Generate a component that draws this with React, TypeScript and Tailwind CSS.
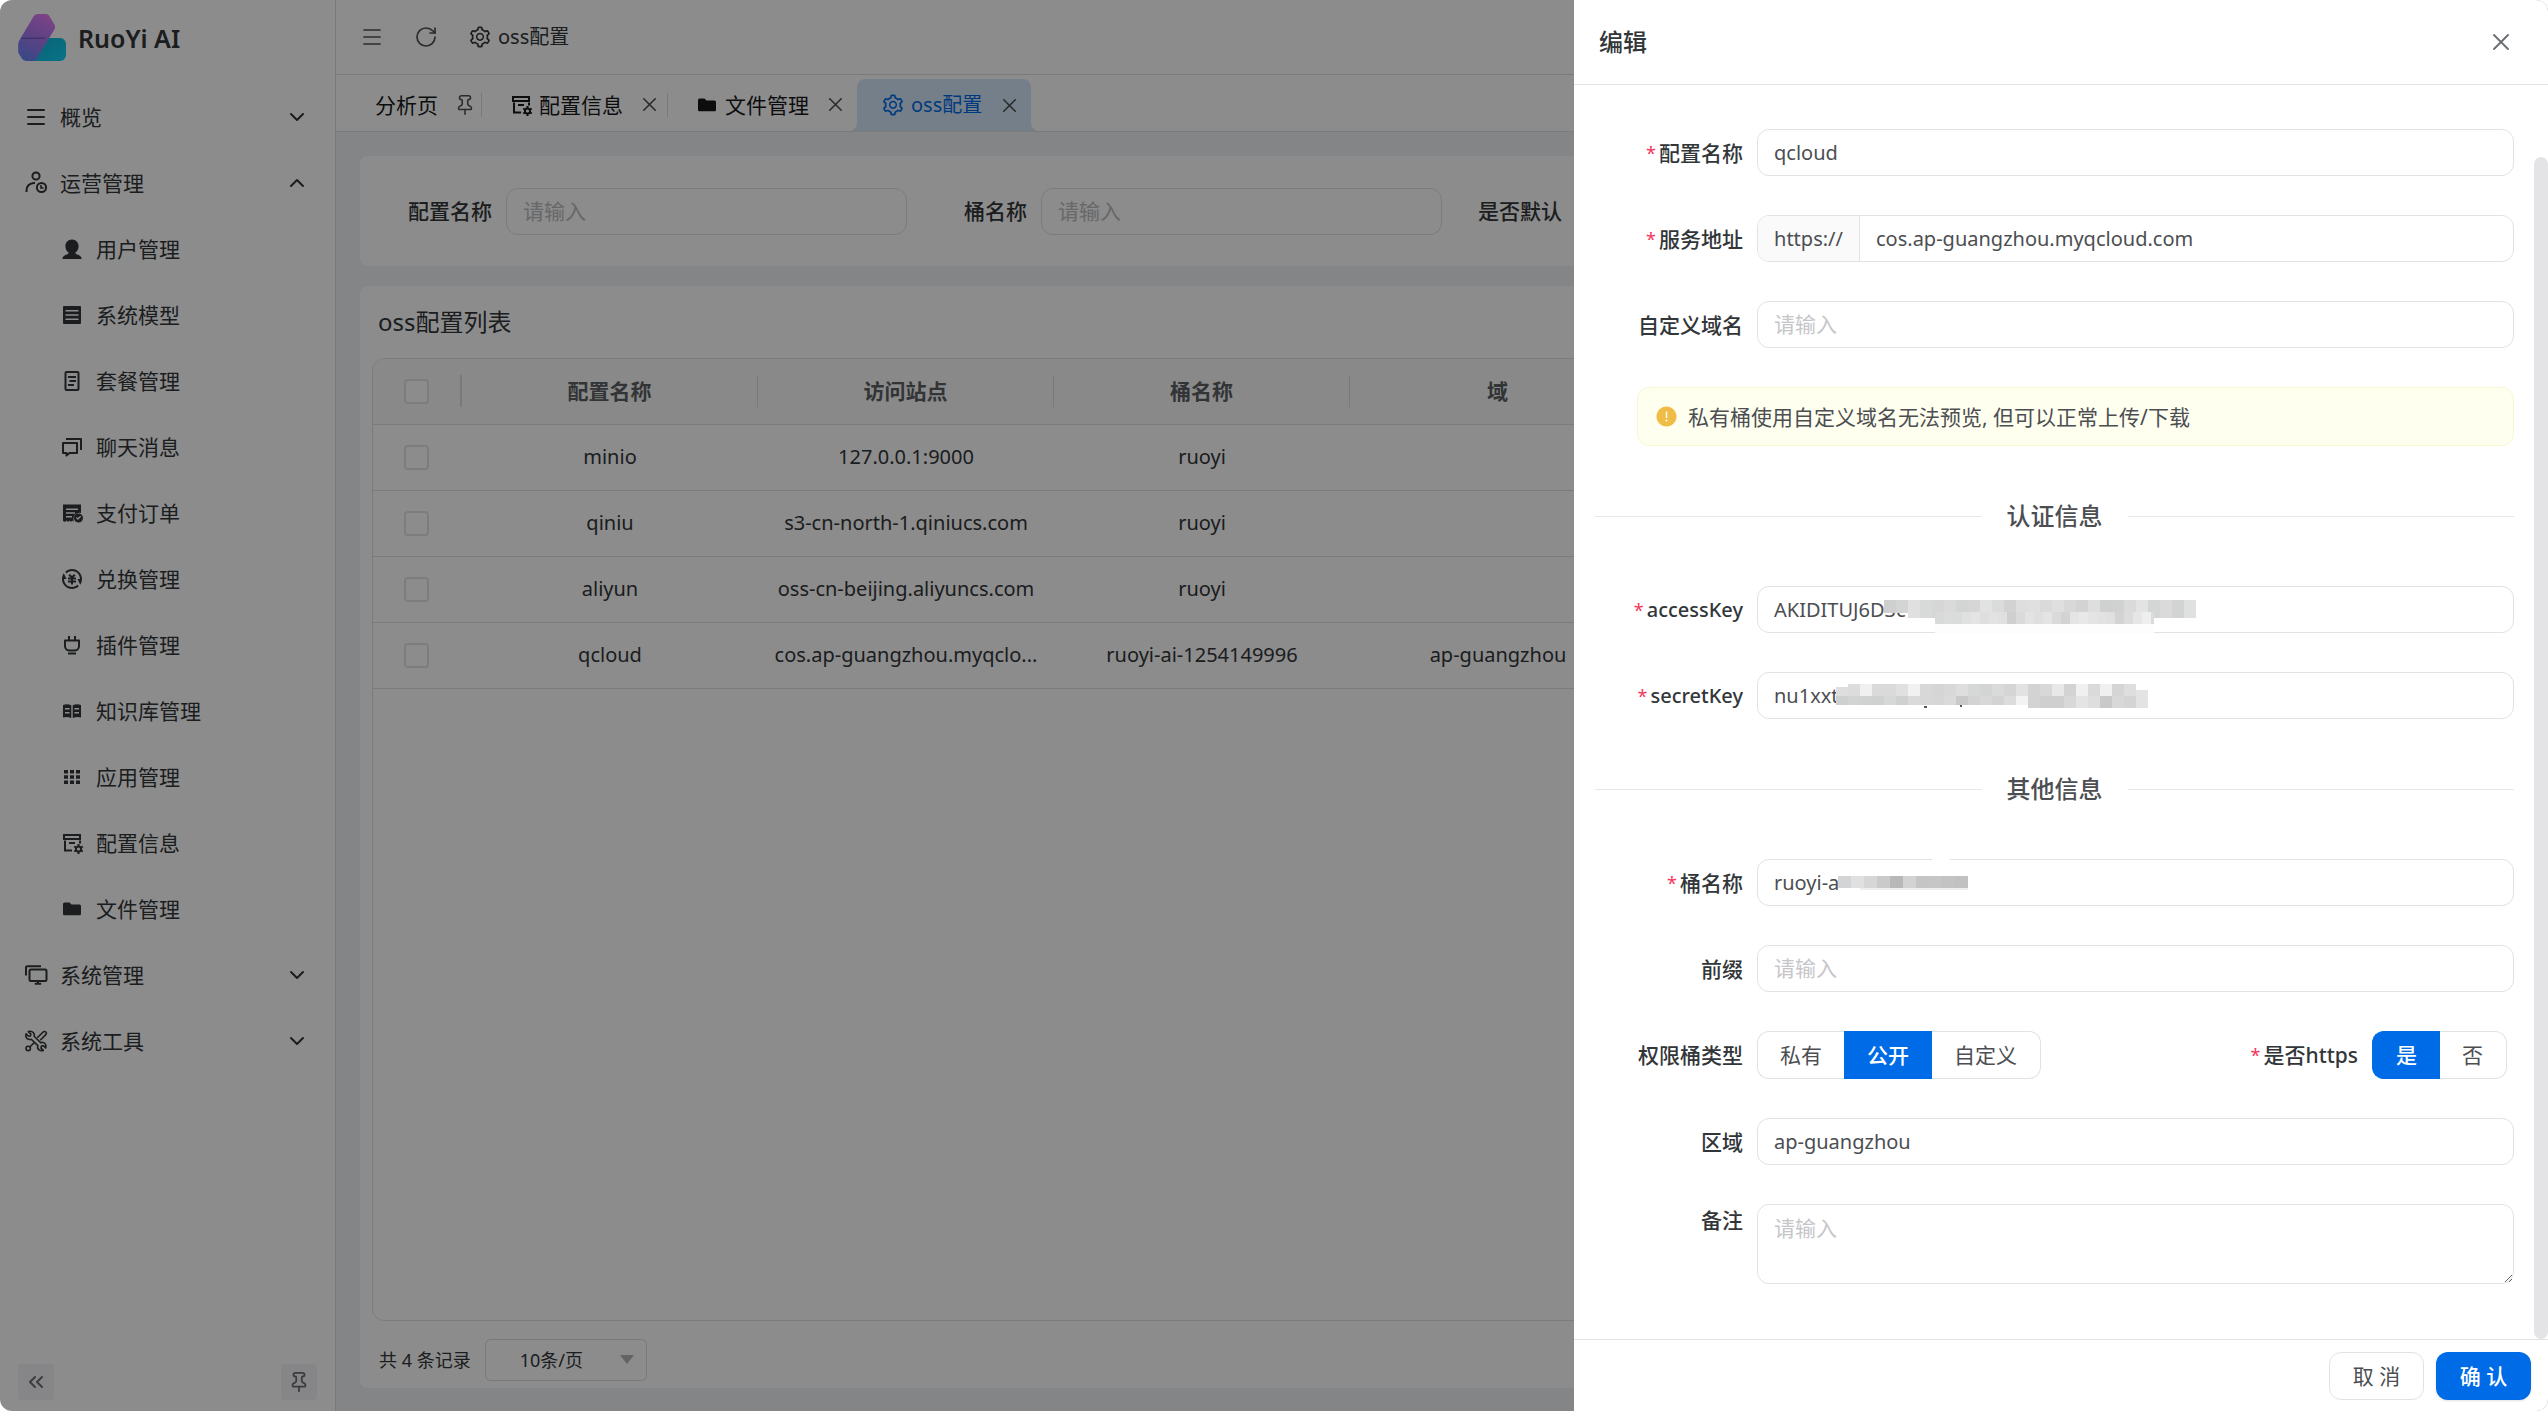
import React from "react";
import { ChevronDown, ChevronUp, ChevronsLeft, Menu, Pin, RotateCw, X } from "lucide-react";
import { AiOutlineSetting, AiFillExclamationCircle } from "react-icons/ai";
import { RiExchangeCnyFill } from "react-icons/ri";

const Svg = ({ children, fill = false, size = 24 }: { children: React.ReactNode; fill?: boolean; size?: number }) => (
  <svg
    width={size}
    height={size}
    viewBox="0 0 24 24"
    fill={fill ? "currentColor" : "none"}
    stroke={fill ? "none" : "currentColor"}
    strokeWidth="2"
    aria-hidden="true"
    className="shrink-0"
  >
    {children}
  </svg>
);

const Gear = ({ cx, cy }: { cx: number; cy: number }) => (
  <g transform={`translate(${cx} ${cy})`} fill="none" stroke="currentColor">
    <circle r="2.6" strokeWidth="2" />
    <path d="M0-3v-1.900M0 3v1.900M2.600-1.500l1.700-1M-2.600 1.500l-1.700 1M2.600 1.500l1.700 1M-2.600-1.500l-1.700-1" strokeWidth="2" />
  </g>
);

const UserClockIcon = () => (
  <Svg>
    <circle cx="12" cy="5" r="3.6" />
    <path d="M2.500 21v-1.500c0-4 2.700-6.800 7-7.500h1.500" />
    <circle cx="17.500" cy="16.500" r="4.600" />
    <path d="M17 14v3h2.600" strokeWidth="1.600" />
  </Svg>
);
const UserIcon = () => (
  <Svg fill>
    <path d="M12 2.500c4 0 6.600 3 6.600 6.800 0 2.700-1.300 5-3.200 6.300 0 1.200.6 1.500 2 2 2.200.8 4 1.700 4.300 4.400H2.300c.3-2.700 2.100-3.600 4.300-4.400 1.400-.5 2-.8 2-2C6.700 14.300 5.400 12 5.400 9.300 5.400 5.500 8 2.500 12 2.500z" />
  </Svg>
);
const ModelIcon = () => (
  <Svg fill>
    <path
      fillRule="evenodd"
      d="M4 3h16a1 1 0 0 1 1 1v16a1 1 0 0 1-1 1H4a1 1 0 0 1-1-1V4a1 1 0 0 1 1-1zm1.500 4v1.600h13V7zm0 4.200v1.600h13v-1.600zm0 4.200V17h13v-1.600z"
    />
  </Svg>
);
const PlanIcon = () => (
  <Svg>
    <rect x="5.500" y="3" width="13" height="18" rx="1" />
    <path d="M8 8h8M9.500 12h6.500M8 16h6" strokeWidth="1.800" />
  </Svg>
);
const ChatIcon = () => (
  <Svg>
    <path d="M3 8h14v10H9.500L6.500 20.500V18H3z" strokeLinejoin="round" />
    <path d="M6 4h15v11" strokeLinejoin="round" />
  </Svg>
);
const OrderIcon = () => (
  <Svg fill>
    <path
      fillRule="evenodd"
      d="M3 3.500h18V12a6 6 0 0 0-7.500 6.500V21l-1.300-1.500L11 21l-1.500-1.500L8 21l-1.500-1.500L5 21l-2-1zm3 4V9h12V7.500zm0 3.700v1.600h9v-1.600zm0 3.800v1.600h6V15z"
    />
    <path fillRule="evenodd" d="M18.500 12.500a4.500 4.500 0 1 0 0 9 4.500 4.500 0 0 0 0-9zm-.6 6.400l-2-2 .9-.9 1.100 1.100 2.300-2.300.9.900z" />
  </Svg>
);
const PlugIcon = () => (
  <Svg>
    <path d="M5 7.500h14v5.500a4.500 4.500 0 0 1-4.500 4.500h-5A4.500 4.500 0 0 1 5 13z" strokeLinejoin="round" />
    <path d="M9 3v4.500M15 3v4.500M8 20.500h8" />
  </Svg>
);
const BookIcon = () => (
  <Svg fill>
    <path
      fillRule="evenodd"
      d="M3 6c2.700-1 5.700-1 8.300.3V19c-2.600-1.200-5.600-1.400-8.300-.5zM5 9v1.600h4.600V9zm0 4v1.600h4.600V13zM21 6c-2.700-1-5.700-1-8.300.3V19c2.600-1.200 5.600-1.400 8.300-.5zM14.400 9v1.600H19V9zm0 4v1.600H19V13z"
    />
  </Svg>
);
const AppsIcon = () => (
  <Svg fill>
    <path d="M4 5h4v3.600H4zM10 5h4v3.600h-4zM16 5h4v3.600h-4zM4 10.200h4v3.600H4zM10 10.200h4v3.600h-4zM16 10.200h4v3.600h-4zM4 15.400h4V19H4zM10 15.400h4V19h-4zM16 15.400h4V19h-4z" />
  </Svg>
);
const ConfigIcon = () => (
  <Svg>
    <path d="M4 4h16v4H4zM5 9.500V19.500h7M9 12h6M20 9.500v3" />
    <Gear cx={18.500} cy={18} />
  </Svg>
);
const FolderIcon = () => (
  <Svg fill>
    <path d="M4.500 5.500h5l2 2h8A1.500 1.500 0 0 1 21 9v8a1.300 1.300 0 0 1-1.300 1.300H4.300A1.300 1.300 0 0 1 3 17V7a1.500 1.500 0 0 1 1.500-1.500z" />
  </Svg>
);
const ScreensIcon = () => (
  <Svg>
    <rect x="5.500" y="6.500" width="17" height="11.500" rx="1.200" />
    <path d="M2 12.500V4.500A1.200 1.200 0 0 1 3.200 3.300H17M14 18v2.500M10.800 20.800h6.400" />
  </Svg>
);
const ToolsIcon = () => (
  <Svg>
    <g strokeWidth="1.600" strokeLinejoin="round" strokeLinecap="round">
      <path d="M4.300 2.600l2.500 2.500-.3 1.900-1.900.3L2.100 4.800C1.200 7.400 2.400 9.700 4.500 10.300c1 .3 2 .2 2.800-.1l6.500 6.400c-.5 2.200.7 4.300 2.800 4.900 1 .3 1.900.2 2.700-.1l-2.300-2.300.4-2 2-.4 2.300 2.300c.9-2.500-.4-4.800-2.400-5.400-.9-.3-1.800-.2-2.600.1L10.200 7.300c.4-2.100-.7-4.100-2.700-4.800-1.100-.4-2.200-.3-3.200.1z" />
      <path d="M13.800 8.200l5.100-5c.9-.9 2.200-.9 2.900-.2s.6 2-.3 2.900l-4.800 4.800" />
      <path d="M9.800 14l-4 4" />
      <circle cx="4.200" cy="19.400" r="2.200" />
    </g>
  </Svg>
);

const subItems: [string, React.ReactNode][] = [
  ["用户管理", <UserIcon />],
  ["系统模型", <ModelIcon />],
  ["套餐管理", <PlanIcon />],
  ["聊天消息", <ChatIcon />],
  ["支付订单", <OrderIcon />],
  ["兑换管理", <RiExchangeCnyFill size={24} />],
  ["插件管理", <PlugIcon />],
  ["知识库管理", <BookIcon />],
  ["应用管理", <AppsIcon />],
  ["配置信息", <ConfigIcon />],
  ["文件管理", <FolderIcon />],
];

const TopItem = ({ icon, label, open = false }: { icon: React.ReactNode; label: string; open?: boolean }) => (
  <button type="button" aria-expanded={open} className="flex h-[66px] w-full items-center gap-3 pr-[26px] pl-6">
    <span className="flex w-6 justify-center">{icon}</span>
    <span className="flex-1 text-left">{label}</span>
    {open ? <ChevronUp size={24} /> : <ChevronDown size={24} />}
  </button>
);

const Logo = () => (
  <svg width="48" height="48" viewBox="0 0 48 48" aria-hidden="true">
    <defs>
      <linearGradient id="limb" x1="0.7" y1="0" x2="0.3" y2="1">
        <stop offset="0" stopColor="#e07cf4" />
        <stop offset="0.5" stopColor="#a978f0" />
        <stop offset="1" stopColor="#6a84f5" />
      </linearGradient>
      <linearGradient id="foot" x1="0" y1="0" x2="1" y2="1">
        <stop offset="0" stopColor="#12b5d2" />
        <stop offset="1" stopColor="#12d0f8" />
      </linearGradient>
    </defs>
    <path d="M26 24h16a6 6 0 0 1 6 6v11a6 6 0 0 1-6 6H15z" fill="url(#foot)" />
    <path
      d="M20 0h8a4 4 0 0 1 3 1.600l5.400 9a5 5 0 0 1 0 5L18.500 45a4 4 0 0 1-3.400 2H8a5 5 0 0 1-4-2.200L.8 39.500a5 5 0 0 1-.6-3V30a6 6 0 0 1 .8-3L15.500 2.500A5 5 0 0 1 20 0z"
      fill="url(#limb)"
    />
    <path d="M3 24.200h24" stroke="#5b54a8" strokeWidth="1" />
  </svg>
);

const Sidebar = () => (
  <aside className="flex w-[336px] shrink-0 flex-col border-r border-[#dcdee2] bg-white">
    <div className="flex h-[75px] items-center gap-3 pl-[18px]">
      <Logo />
      <span className="text-[25px] font-semibold">RuoYi AI</span>
    </div>
    <nav className="mt-[9px] flex flex-1 flex-col">
      <TopItem icon={<Menu size={24} />} label="概览" />
      <TopItem icon={<UserClockIcon />} label="运营管理" open />
      {subItems.map(([label, icon]) => (
        <a key={label} href="#" className="flex h-[66px] items-center gap-3 pl-[60px]">
          {icon}
          <span>{label}</span>
        </a>
      ))}
      <TopItem icon={<ScreensIcon />} label="系统管理" />
      <TopItem icon={<ToolsIcon />} label="系统工具" />
    </nav>
    <div className="flex justify-between px-[18px] pb-[11px] text-[#6b6e73]">
      <button type="button" aria-label="折叠" className="flex size-9 items-center justify-center rounded-sm bg-[#f5f5f7]">
        <ChevronsLeft size={24} />
      </button>
      <button type="button" aria-label="固定" className="flex size-9 items-center justify-center rounded-sm bg-[#f5f5f7]">
        <Pin size={22} />
      </button>
    </div>
  </aside>
);

const Tab = ({ icon, label }: { icon: React.ReactNode; label: string }) => (
  <div className="flex w-[185px] items-center pl-[27px] text-[#18191b]">
    <span className="mr-1.5 flex">{icon}</span>
    <span>{label}</span>
    <button type="button" aria-label={"关闭" + label} className="ml-[15px] text-[#4d5054]">
      <X size={23} strokeWidth={1.700} />
    </button>
  </div>
);

const SearchField = ({ id, label }: { id: string; label: string }) => (
  <div className="flex items-center gap-[14px]">
    <label htmlFor={id} className="w-[120px] shrink-0 text-right font-medium">
      {label}
    </label>
    <input
      id={id}
      placeholder="请输入"
      className="h-[47px] min-w-0 flex-1 rounded-xl border border-[#dfe0e3] bg-white px-4 placeholder:text-[#bcbdc0]"
    />
  </div>
);

const rows = [
  ["minio", "127.0.0.1:9000", "ruoyi", ""],
  ["qiniu", "s3-cn-north-1.qiniucs.com", "ruoyi", ""],
  ["aliyun", "oss-cn-beijing.aliyuncs.com", "ruoyi", ""],
  ["qcloud", "cos.ap-guangzhou.myqclo...", "ruoyi-ai-1254149996", "ap-guangzhou"],
];

const Check = ({ label }: { label: string }) => (
  <input
    type="checkbox"
    aria-label={label}
    className="ml-[31px] block size-[25px] appearance-none rounded-[4px] border-2 border-[#e3e4e7] bg-white"
  />
);

const Content = () => (
  <main className="flex flex-1 flex-col gap-5 bg-[#eff2f5] px-6 pt-6 pb-[23px]">
    <form className="grid h-[110px] grid-cols-4 items-center rounded-lg bg-white px-3">
      <SearchField id="q-name" label="配置名称" />
      <SearchField id="q-bucket" label="桶名称" />
      <SearchField id="q-default" label="是否默认" />
    </form>
    <section className="flex flex-1 flex-col rounded-lg bg-white px-3">
      <h2 className="flex h-[72px] items-center pl-1.5 text-[24px]">oss配置列表</h2>
      <div className="flex-1 overflow-hidden rounded-xl border border-[#e0e1e4]">
        <table className="w-full table-fixed border-collapse text-center">
          <colgroup>
            <col className="w-[89px]" />
            <col className="w-[296px]" />
            <col className="w-[296px]" />
            <col className="w-[296px]" />
            <col className="w-[296px]" />
            <col />
          </colgroup>
          <thead className="bg-[#fafafb] text-[#5c5f63]">
            <tr className="h-[65px] border-b border-[#e0e1e4]">
              <th scope="col">
                <div className="flex h-8 items-center border-r-2 border-[#dcdde0]">
                  <Check label="全选" />
                </div>
              </th>
              {["配置名称", "访问站点", "桶名称", "域"].map((h) => (
                <th key={h} scope="col" className="font-bold">
                  <div className="h-8 border-r border-[#dcdde0] leading-8">{h}</div>
                </th>
              ))}
              <th />
            </tr>
          </thead>
          <tbody>
            {rows.map((r) => (
              <tr key={r[0]} className="h-[66px] border-b border-[#e0e1e4]">
                <td>
                  <Check label={r[0]} />
                </td>
                {r.map((c, i) => (
                  <td key={i} className="text-[20px]">
                    {c}
                  </td>
                ))}
                <td />
              </tr>
            ))}
          </tbody>
        </table>
      </div>
      <div className="flex items-center gap-[14px] pt-[18px] pb-[7px] pl-[7px] text-[18px]">
        <span>共 4 条记录</span>
        <div className="relative">
          <select aria-label="每页条数" className="h-[42px] w-[162px] appearance-none rounded-md border border-[#dcdde0] bg-white pl-[34px]">
            <option>10条/页</option>
          </select>
          <svg width="14" height="9" viewBox="0 0 14 9" aria-hidden="true" className="pointer-events-none absolute top-4 right-[13px]">
            <path d="M0 0h14L7 9z" fill="#b4b5b8" />
          </svg>
        </div>
      </div>
    </section>
  </main>
);

const Workspace = () => (
  <div className="flex min-w-0 flex-1 flex-col">
    <header className="flex h-[75px] items-center border-b border-[#e0e1e4] bg-white pl-6 text-[#4d5054]">
      <button type="button" aria-label="菜单" className="mr-[30px]">
        <Menu size={24} strokeWidth={1.700} />
      </button>
      <button type="button" aria-label="刷新" className="mr-[30px]">
        <RotateCw size={24} strokeWidth={1.700} />
      </button>
      <AiOutlineSetting size={24} className="mr-1.5 text-[#323639]" />
      <span className="text-[20px] text-[#323639]">oss配置</span>
    </header>
    <div className="flex h-[57px] items-center border-b border-[#e0e1e4] bg-white pt-[3px] pl-[39px]">
      <span className="mr-4 text-[#18191b]">分析页</span>
      <Pin size={22} strokeWidth={1.700} className="mr-[5px] text-[#4d5054]" />
      <span className="h-6 w-px bg-[#dcdde0]" />
      <Tab icon={<ConfigIcon />} label="配置信息" />
      <span className="h-6 w-px bg-[#dcdde0]" />
      <Tab icon={<FolderIcon />} label="文件管理" />
      <div className="relative ml-1 flex h-[52px] w-[174px] items-center self-end rounded-t-lg bg-[#d6e7fb] pl-6 text-[#006be6]">
        <svg width="8" height="8" viewBox="0 0 8 8" aria-hidden="true" className="absolute bottom-0 -left-2">
          <path d="M8 0v8H0a8 8 0 0 0 8-8z" fill="#d6e7fb" />
        </svg>
        <svg width="8" height="8" viewBox="0 0 8 8" aria-hidden="true" className="absolute -right-2 bottom-0">
          <path d="M0 0v8h8a8 8 0 0 1-8-8z" fill="#d6e7fb" />
        </svg>
        <AiOutlineSetting size={24} className="mr-1.5" />
        <span className="text-[20px]">oss配置</span>
        <button type="button" aria-label="关闭oss配置" className="ml-4 text-[#4d5054]">
          <X size={23} strokeWidth={1.700} />
        </button>
      </div>
    </div>
    <Content />
  </div>
);

const inputBase =
  "h-[47px] w-full rounded-xl border border-[#e2e2e4] bg-white px-4 text-[20px] text-[#4c4e52] placeholder:text-[21px] placeholder:text-[#c6c6ca]";

const Item = ({
  id,
  label,
  required = false,
  top = false,
  children,
}: {
  id?: string;
  label: string;
  required?: boolean;
  top?: boolean;
  children: React.ReactNode;
}) => (
  <div className={top ? "flex items-start gap-[14px]" : "flex items-center gap-[14px]"}>
    <label htmlFor={id} className="flex w-[148px] shrink-0 justify-end gap-[3px] font-medium whitespace-nowrap">
      {required && <span className="text-[18px] font-normal text-[#f5365c]">*</span>}
      <span className={/^[a-z]/i.test(label) ? "text-[20px]" : ""}>{label}</span>
    </label>
    <div className="relative min-w-0 flex-1">{children}</div>
  </div>
);

type Cell = [number, number, number, number, string];
const strip = (x: number, y: number, w: number, h: number, shades: string): Cell[] =>
  shades.split(" ").map((s, i) => [x + i * w, y, w, h, "#" + s]);

const Mosaic = ({ cells }: { cells: Cell[] }) => (
  <svg width="450" height="48" viewBox="0 0 450 48" shapeRendering="crispEdges" aria-hidden="true" className="pointer-events-none absolute top-0 left-0">
    {cells.map(([x, y, w, h, c], i) => (
      <rect key={i} x={x} y={y} width={w} height={h} fill={c} />
    ))}
  </svg>
);

const accessCells: Cell[] = [
  [178, 38, 219, 10, "#fdfdfd"],
  ...strip(127, 14, 12, 13, "cfcfcf d3d4d4"),
  ...strip(151, 14, 12, 18, "e0e0e0 d8d9d9 d6d6d6 dadada d3d4d4 d6d6d6 e2e2e2 dadbdb d2d2d2 dedede e0e0e0 dadada dfdfdf d8d8d8 d3d3d3 dedede cfd0d0 d0d1d1 dadada e3e3e3 d4d6d6 dadada d2d4d4 e0e0e0"),
  ...strip(178, 26, 9, 12, "d8d9d9 dcdcdc dadbdb e0e0e0 e4e4e4 dedede e2e2e2 e0e0e0 cfcfcf dadada e3e3e3 dfdfdf e4e4e4 dadada d3d3d3 e4e4e4 e8e8e8 e4e4e4 e2e2e2 e0e0e0 d3d3d3 dcdcdc e6e6e6 eeeeee"),
  [394, 26, 3, 12, "#dcdcdc"],
];
const secretCells: Cell[] = [
  ...strip(91, 12, 12, 12, "dcdcdc f0f0f0 dadada dadada e0e0e0 f1f1f1 d8d8d8 d5d5d5 d8d8d8 dedede d6d7d7 d3d4d4 dadada d5d5d5 e2e2e2 d3d3d3 d8d8d8 e8e8e8 d3d3d3 f0f0f0 dadada f0f0f0 d5d5d5 dedede"),
  [79, 15, 12, 9, "#dedede"],
  [379, 18, 12, 18, "#e3e3e3"],
  ...strip(79, 24, 12, 9, "cfcfcf d2d4d4 d0d2d2 cfd1d1 d6d8d8 cfd0d0 dadada d8d8d8 d6d6d6 dadada c9c9c9 d3d3d3 d8d8d8 d3d3d3 dcdcdc f3f3f3"),
  ...strip(271, 24, 12, 12, "d3d3d3 cfcfcf cfcfcf d8d8d8 e4e4e4 dedede c9c9c9 d8d8d8 d4d4d4"),
  [167, 34, 3, 2, "#55575a"],
  [203, 33, 2, 2, "#55575a"],
];
const bucketCells: Cell[] = [
  [175, 0, 18, 1, "#ffffff"],
  ...strip(81, 17, 13, 12, "d3d4d6 e0e0e0 d6d6d6 cacaca b8b8b8 d3d3d3 c5c5c5 c6c6c6 c3c3c3 c1c1c1"),
  [103, 29, 108, 2, "#eeeeee"],
];

const Divider = ({ children }: { children: React.ReactNode }) => (
  <div className="my-[52px] flex items-center gap-[25px]">
    <span className="h-px flex-1 bg-[#e8e8ea]" />
    <h3 className="text-[24px] leading-9 font-medium text-[#4c4e52]">{children}</h3>
    <span className="h-px flex-1 bg-[#e8e8ea]" />
  </div>
);

const RadioGroup = ({ name, options, value }: { name: string; options: string[]; value: string }) => (
  <div role="radiogroup" aria-label={name} className="flex h-12 w-fit">
    {options.map((o) => (
      <label
        key={o}
        className="flex cursor-pointer items-center border border-[#e2e2e4] bg-white px-[22px] text-[#4c4e52] not-last:border-r-0 not-first:border-l-0 first:rounded-l-xl last:rounded-r-xl last:pr-[23px] has-checked:border-[#006be6] has-checked:bg-[#006be6] has-checked:px-[23px] has-checked:font-medium has-checked:text-white"
      >
        <input type="radio" name={name} value={o} defaultChecked={o === value} className="sr-only" />
        {o}
      </label>
    ))}
  </div>
);

const Drawer = () => (
  <div role="dialog" aria-label="编辑" className="flex w-[974px] flex-col bg-white">
    <div className="flex h-[85px] items-center justify-between border-b border-[#e2e2e4] pr-[33px] pl-[25px]">
      <h1 className="text-[24px] font-medium">编辑</h1>
      <button type="button" aria-label="关闭" className="text-[#6b6e73]">
        <X size={28} strokeWidth={1.600} />
      </button>
    </div>
    <div className="flex min-h-0 flex-1">
      <form className="flex flex-1 flex-col pt-[44px] pr-5 pl-[21px]">
        <div className="flex flex-col gap-[39px]">
          <Item id="name" label="配置名称" required>
            <input id="name" defaultValue="qcloud" className={inputBase} />
          </Item>
          <Item id="endpoint" label="服务地址" required>
            <div className="flex h-[47px] overflow-hidden rounded-xl border border-[#e2e2e4] text-[20px] text-[#4c4e52]">
              <span className="flex w-[102px] items-center justify-center border-r border-[#e2e2e4] bg-[#fafafa]">https://</span>
              <input id="endpoint" defaultValue="cos.ap-guangzhou.myqcloud.com" className="min-w-0 flex-1 px-4" />
            </div>
          </Item>
          <Item id="domain" label="自定义域名">
            <input id="domain" placeholder="请输入" className={inputBase} />
          </Item>
          <div role="alert" className="ml-[42px] flex h-[59px] items-center gap-2.5 rounded-xl border border-[#f8f7cf] bg-[#fffff0] px-[17px] text-[#4c4e52]">
            <AiFillExclamationCircle size={23} className="text-[#efbd47]" />
            <span>私有桶使用自定义域名无法预览, 但可以正常上传/下载</span>
          </div>
        </div>
        <Divider>认证信息</Divider>
        <div className="flex flex-col gap-[39px]">
          <Item id="access" label="accessKey" required>
            <input id="access" defaultValue="AKIDITUJ6D3c" className={inputBase} />
            <Mosaic cells={accessCells} />
          </Item>
          <Item id="secret" label="secretKey" required>
            <input id="secret" defaultValue="nu1xxt" className={inputBase} />
            <Mosaic cells={secretCells} />
          </Item>
        </div>
        <Divider>其他信息</Divider>
        <div className="flex flex-col gap-[39px]">
          <Item id="bucket" label="桶名称" required>
            <input id="bucket" defaultValue="ruoyi-a" className={inputBase} />
            <Mosaic cells={bucketCells} />
          </Item>
          <Item id="prefix" label="前缀">
            <input id="prefix" placeholder="请输入" className={inputBase} />
          </Item>
          <div className="flex justify-between">
            <Item label="权限桶类型">
              <RadioGroup name="权限桶类型" options={["私有", "公开", "自定义"]} value="公开" />
            </Item>
            <div className="w-[304px]">
              <Item label="是否https" required>
                <RadioGroup name="是否https" options={["是", "否"]} value="是" />
              </Item>
            </div>
          </div>
          <Item id="region" label="区域">
            <input id="region" defaultValue="ap-guangzhou" className={inputBase} />
          </Item>
          <Item id="remark" label="备注" top>
            <textarea
              id="remark"
              placeholder="请输入"
              className="block h-20 w-full rounded-xl border border-[#e2e2e4] bg-white px-4 py-[7px] text-[#4c4e52] placeholder:text-[#c6c6ca]"
            />
          </Item>
        </div>
      </form>
      <div className="mt-[72px] w-[14px] rounded-full bg-[#e4e4e6]" />
    </div>
    <div className="flex h-[72px] items-start justify-end gap-3 border-t border-[#e2e2e4] pt-3 pr-[17px]">
      <button type="button" className="h-12 w-[95px] rounded-xl border border-[#e2e2e4] bg-white text-[#4c4e52]">
        取 消
      </button>
      <button type="button" className="h-12 w-[95px] rounded-xl bg-[#006be6] font-medium text-white shadow-sm">
        确 认
      </button>
    </div>
  </div>
);

export default function App() {
  return (
    <div className="relative flex min-h-screen overflow-hidden rounded-xl bg-white font-['Noto_Sans','Noto_Sans_CJK_SC',sans-serif] text-[21px] leading-8 text-[#323639]">
      <Sidebar />
      <Workspace />
      <div className="absolute inset-0 flex justify-end bg-black/45">
        <Drawer />
      </div>
    </div>
  );
}
